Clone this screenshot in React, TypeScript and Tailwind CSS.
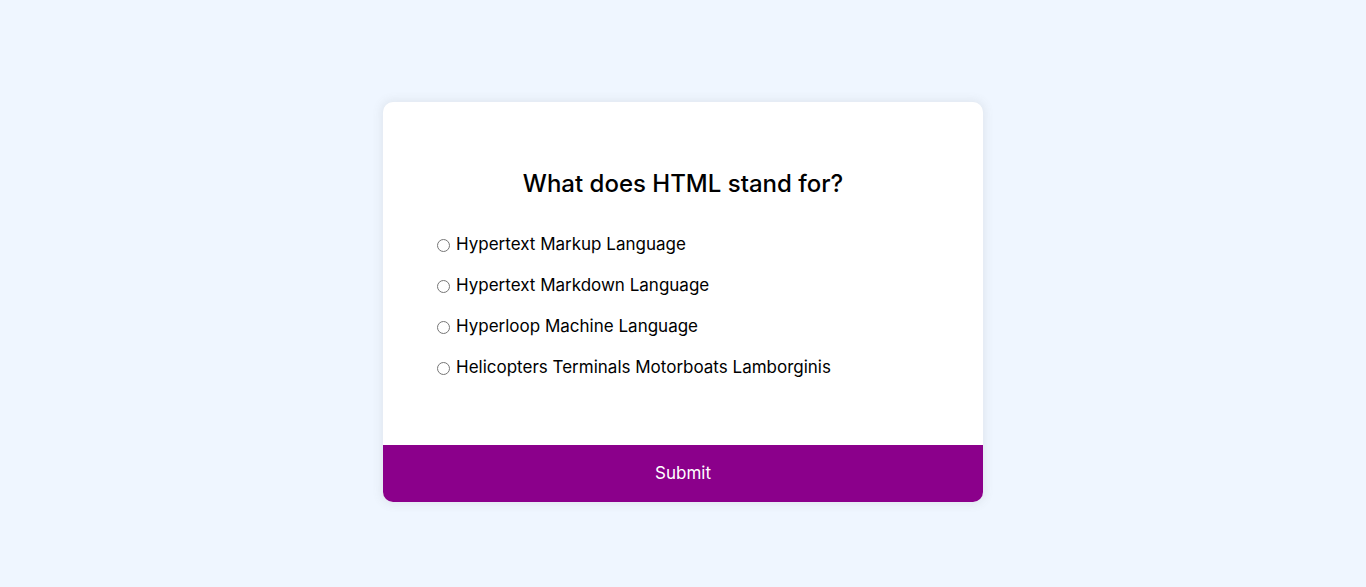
const options = [
  { id: 'a', label: 'Hypertext Markup Language' },
  { id: 'b', label: 'Hypertext Markdown Language' },
  { id: 'c', label: 'Hyperloop Machine Language' },
  { id: 'd', label: 'Helicopters Terminals Motorboats Lamborginis' },
];

export default function App() {
  return (
    <div className="flex min-h-[587px] w-full justify-center bg-[#eff6ff] pt-[102px] font-['Inter',sans-serif]">
      <div className="h-fit w-[600px] overflow-hidden rounded-[10px] bg-white shadow-[0_0_10px_2px_rgba(100,100,100,0.1)]">
        {/* 问题区 */}
        <div className="px-[53px] pt-[60px] pb-[65px]">
          <h2 className="py-[4px] text-center text-[24px] font-medium leading-[36px] text-black">
            What does HTML stand for?
          </h2>
          <ul className="mt-[27px] flex flex-col gap-[17px]">
            {options.map((opt) => (
              <li key={opt.id} className="flex h-[24px] items-center text-[17px] text-black">
                <input type="radio" name="answer" id={opt.id} className="mr-[6px] ml-[1px] h-[13px] w-[13px]" />
                <label htmlFor={opt.id}>{opt.label}</label>
              </li>
            ))}
          </ul>
        </div>

        {/* 提交按钮 */}
        <button className="block h-[57px] w-full bg-[#8b008b] text-[17px] text-white">
          Submit
        </button>
      </div>
    </div>
  );
}
